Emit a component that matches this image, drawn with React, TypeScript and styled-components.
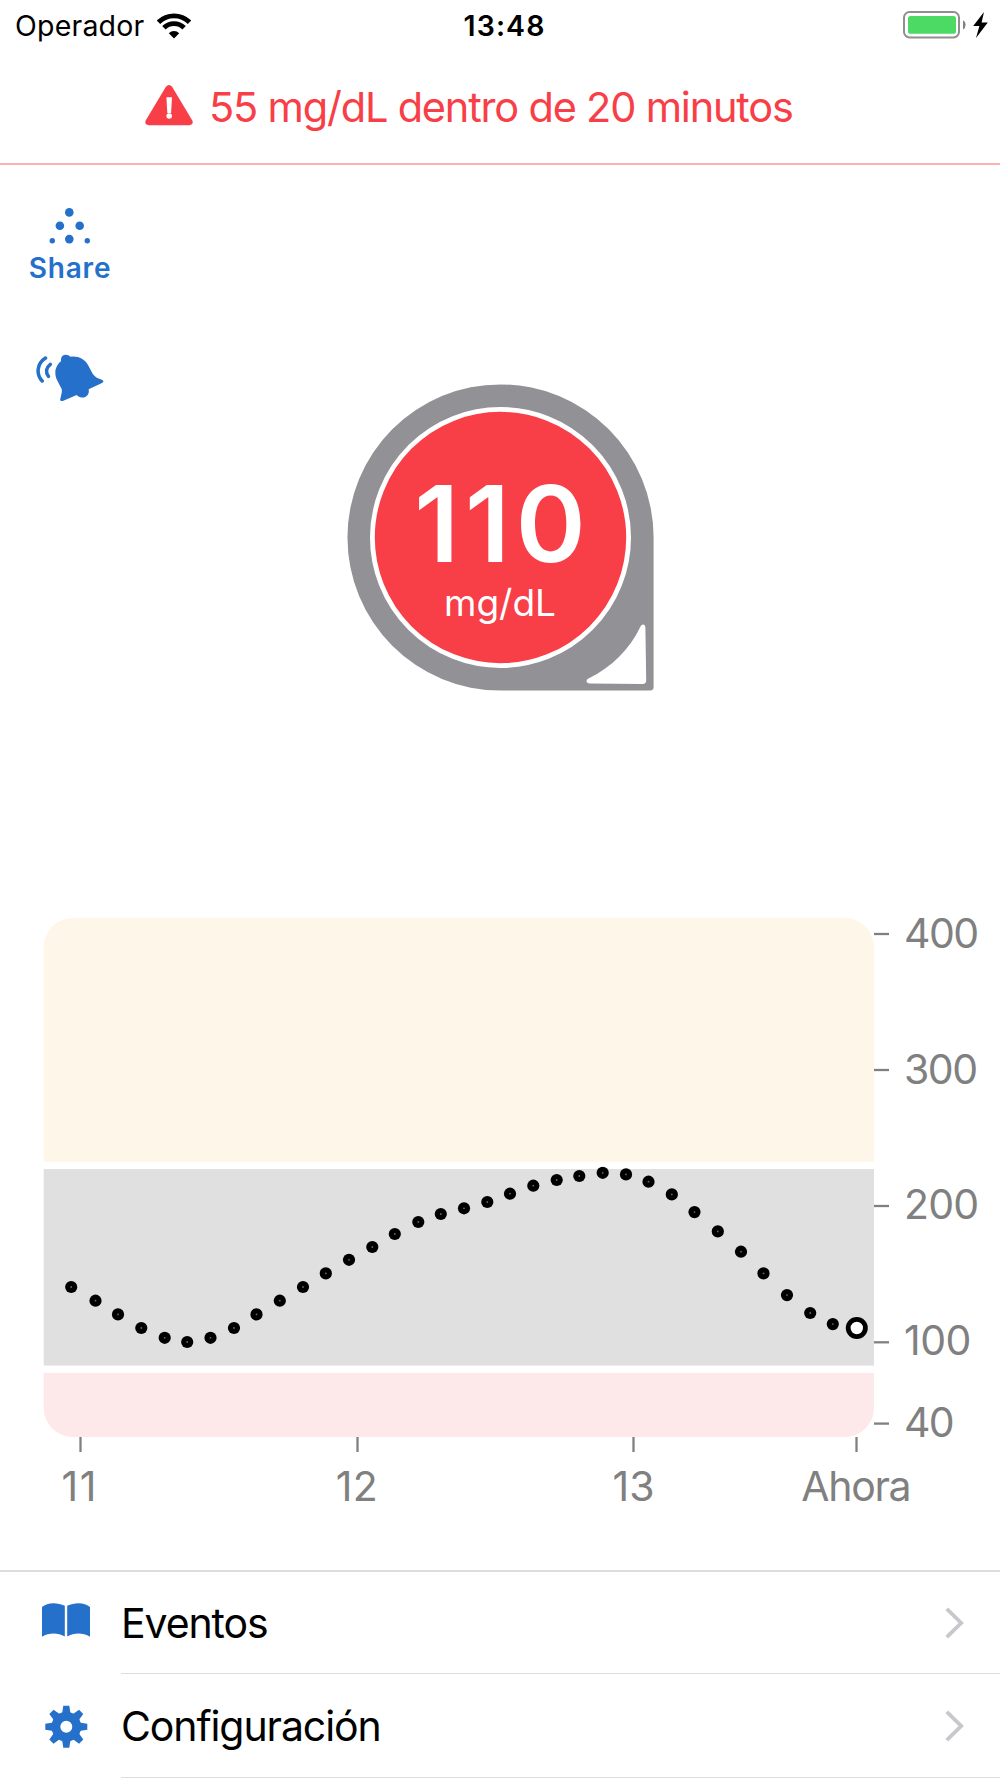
import React from "react";
import styled, { createGlobalStyle } from "styled-components";

const color = {
  red: "#f83e47",
  blue: "#2470ca",
  ring: "#929196",
  axis: "#808080",
  line: "#dcdcde",
};

const GlobalStyle = createGlobalStyle`
  *, *::before, *::after { box-sizing: border-box; }
  body {
    margin: 0;
    background: #fff;
    color: #000;
    font-family: Inter, "Liberation Sans", sans-serif;
  }
  svg { display: block; flex: none; }
`;

const Screen = styled.main`
  display: flex;
  flex-direction: column;
  width: 1000px;
  height: 1778px;
  overflow: hidden;
  background: #fff;
`;

const StatusBar = styled.header`
  display: grid;
  grid-template-columns: 1fr auto 1fr;
  align-items: center;
  height: 51px;
  padding: 0 12px 0 15px;
  font-size: 28.5px;
`;

const Carrier = styled.div`
  display: flex;
  align-items: center;
  gap: 13px;
  letter-spacing: 0.2px;
`;

const Clock = styled.time`
  font-weight: 600;
  letter-spacing: 1.1px;
  padding-left: 6px;
`;

const Power = styled.div`
  display: flex;
  justify-content: flex-end;
  align-items: center;
  gap: 7px;
  padding-bottom: 2px;
`;

const Alert = styled.div`
  display: flex;
  align-items: center;
  gap: 16px;
  height: 114px;
  padding: 0 0 0 145px;
  border-bottom: 2px solid #fcb0b4;
  color: ${color.red};
  font-size: 41.5px;
`;

const AlertText = styled.span`
  white-space: nowrap;
  letter-spacing: -1.2px;
`;

const Hero = styled.section`
  display: grid;
  grid-template-columns: 140px 1fr 140px;
  height: 735px;
`;

const Tools = styled.div`
  display: flex;
  flex-direction: column;
  align-items: center;
  gap: 68px;
  padding-top: 43px;
`;

const Tool = styled.button`
  display: flex;
  flex-direction: column;
  align-items: center;
  gap: 6px;
  padding: 0;
  border: 0;
  background: none;
  color: ${color.blue};
  font: 600 28px/36px Inter, "Liberation Sans", sans-serif;
  letter-spacing: 0.8px;
`;

const Gauge = styled.div`
  display: grid;
  justify-items: center;
  align-content: start;
  padding-top: 219px;

  > * { grid-area: 1 / 1; }
`;

const Reading = styled.div`
  display: flex;
  flex-direction: column;
  align-items: center;
  color: #fff;
`;

const ReadingValue = styled.strong`
  margin: 80px -6px 0 0;
  font-size: 106px;
  line-height: 120px;
  font-weight: 600;
  letter-spacing: 6px;
`;

const ReadingUnit = styled.span`
  font-size: 37px;
  line-height: 38px;
`;

const ChartArea = styled.section`
  height: 670px;
`;

const AxisLabel = styled.text<{ $tracking: number }>`
  fill: ${color.axis};
  font-size: 41px;
  letter-spacing: ${(p) => p.$tracking}px;
`;

const Menu = styled.nav`
  display: flex;
  flex-direction: column;
  border-top: 2px solid ${color.line};
`;

const MenuRow = styled.a`
  display: grid;
  grid-template-columns: 121px 1fr;
  height: 104px;

  &:first-child { height: 102px; }
`;

const MenuIcon = styled.span`
  display: flex;
  align-items: center;
  padding-left: 42px;
`;

const MenuBody = styled.span`
  display: flex;
  align-items: center;
  justify-content: space-between;
  padding-right: 36px;
  border-bottom: 1px solid ${color.line};
  font-size: 41px;
`;

const MenuLabel = styled.span`
  letter-spacing: -1.1px;
`;

const WifiIcon = () => (
  <svg width="34" height="26" viewBox="0 0 34 26">
    <g fill="none" stroke="#000" strokeWidth="4.8">
      <path d="M1.5 9.2A22.2 22.2 0 0 1 32.5 9.2" />
      <path d="M6.9 14.8A14.4 14.4 0 0 1 27.1 14.8" />
    </g>
    <path d="M17 25.5 11.8 20.2A7.4 7.4 0 0 1 22.2 20.2Z" />
  </svg>
);

const BatteryIcon = () => (
  <svg width="63" height="28" viewBox="0 0 63 28">
    <rect x="1" y="1" width="55" height="25.4" rx="5.5" fill="#fff" stroke="#8f8f8f" strokeWidth="2" />
    <rect x="5" y="5" width="48" height="17.8" rx="2.6" fill="#4cd964" />
    <path d="M60 9.3Q62.6 10.5 62.6 13.8T60 18.6Z" fill="#808080" />
  </svg>
);

const BoltIcon = () => (
  <svg width="15" height="26" viewBox="0 0 15 26">
    <path d="M11 0 .2 14.1H6.4L3 26 14.8 10.6H8.6Z" />
  </svg>
);

const WarningIcon = () => (
  <svg width="48" height="44" viewBox="0 0 48 44">
    <path
      d="M20.9 1.8Q24-1.8 27.1 1.8L47.3 35.4Q48.8 39.8 44.3 40.2H3.7Q-.8 39.8.7 35.4Z"
      fill={color.red}
    />
    <path d="M21.4 12.3H27L26.1 28H22.3Z" fill="#fff" />
    <circle cx="24.2" cy="31" r="2.8" fill="#fff" />
  </svg>
);

const ShareIcon = () => (
  <svg width="42" height="36" viewBox="0 0 42 36" fill={color.blue}>
    <circle cx="20.3" cy="4.4" r="4.3" />
    <circle cx="10.9" cy="17.8" r="4.3" />
    <circle cx="30.7" cy="17.8" r="4.3" />
    <circle cx="20.3" cy="31.1" r="4.3" />
    <circle cx="3.3" cy="32.7" r="2.7" />
    <circle cx="38.3" cy="32.7" r="2.7" />
  </svg>
);

const BellIcon = () => (
  <svg width="68" height="48" viewBox="108 493 204 144">
    <path
      d="M166 548C166 535 174 521 183 515V508C184 492 204 492 211 501C235 498 253 507 264 526L278 552C285 563 295 566 306 570C312 573 311 578 306 580L266 599C270 621 248 632 230 616L190 633C184 636 179 632 181 627C184 615 187 605 185 598L171 571C167 563 166 556 166 548Z"
      fill={color.blue}
    />
    <g fill="none" stroke={color.blue} strokeWidth="10.5" strokeLinecap="round">
      <path d="M136.500 505C110 522 108 554 126.500 574" />
      <path d="M151 524C138 534 136 548 145.500 560" />
    </g>
  </svg>
);

const GaugeShape = () => (
  <svg width="307" height="307" viewBox="0 0 307 307">
    <path
      d="M153.5.4A153.1 153.1 0 0 1 306.6 153.5V303Q306.6 306.6 303 306.6H153.5A153.1 153.1 0 0 1 153.5.4Z"
      fill={color.ring}
    />
    <circle cx="153.5" cy="153.5" r="128.1" fill={color.red} stroke="#fff" strokeWidth="4.8" />
    <path
      d="M298.4 243.5L299.2 296.5Q299 299.9 296 300.1L243 299.4C238.5 299 238.6 295.6 242 294.2C265 283 282.5 265 293 243.5C294.5 239.5 298.2 239.7 298.4 243.5Z"
      fill="#fff"
    />
  </svg>
);

const BookIcon = () => (
  <svg width="48" height="40" viewBox="0 0 48 40" fill={color.blue}>
    <path d="M0 4C5-.8 15-1 22.8 2.7V33.6C16 29.5 7 29.5 0 33.8Z" />
    <path d="M48 4C43-.8 33-1 25.2 2.7V33.6C32 29.5 41 29.5 48 33.8Z" />
  </svg>
);

const GearIcon = () => (
  <svg width="48" height="44" viewBox="-24.3 -22.7 48 44">
    {[0, 45, 90, 135, 180, 225, 270, 315].map((angle) => (
      <path
        key={angle}
        d="M-3-21H3L4-14.5Q5-12 9-10H-9Q-5-12-4-14.5Z"
        transform={`rotate(${angle})`}
        fill={color.blue}
      />
    ))}
    <circle r="10.4" fill="none" stroke={color.blue} strokeWidth="8.8" />
  </svg>
);

const Chevron = () => (
  <svg width="19" height="32" viewBox="0 0 19 32">
    <path d="M1.8 1.8 16.2 16 1.8 30.2" fill="none" stroke="#c7c7cc" strokeWidth="3.8" />
  </svg>
);

const points: [number, number][] = [
  [71.2, 1287], [95.5, 1300.7], [118, 1314.4], [141.3, 1328], [164.7, 1337.8],
  [187.2, 1342], [210.5, 1337.8], [234, 1328], [256.5, 1314.4], [279.8, 1300.7],
  [303, 1287], [325.8, 1273.4], [349, 1259.8], [372.3, 1247], [394.8, 1234],
  [418.3, 1222], [440.8, 1214], [464, 1208.3], [487.3, 1202], [510, 1193.7],
  [533.3, 1185.7], [556.7, 1180], [579.3, 1176], [602.7, 1172.8], [626, 1174.4],
  [648.5, 1181.7], [671.8, 1194.4], [694.5, 1212.1], [717.8, 1231.4], [741, 1251.7],
  [763.5, 1273.4], [787, 1295.1], [810.2, 1313], [832.8, 1324.1],
];

const yTicks = [
  { label: "400", y: 934, baseline: 948.3, tracking: -1.5 },
  { label: "300", y: 1070, baseline: 1084, tracking: -1.5 },
  { label: "200", y: 1206, baseline: 1219.4, tracking: -0.8 },
  { label: "100", y: 1342.3, baseline: 1355.2, tracking: -0.5 },
  { label: "40", y: 1423.6, baseline: 1437, tracking: -1.8 },
];

const xTicks = [
  { label: "11", x: 80.5, textX: 79.8, tracking: 1.5 },
  { label: "12", x: 357.5, textX: 357, tracking: 0.4 },
  { label: "13", x: 633.5, textX: 633.5, tracking: 0 },
  { label: "Ahora", x: 856.5, textX: 855.8, tracking: -1.3 },
];

const GlucoseChart = () => (
  <svg width="1000" height="670" viewBox="0 900 1000 670">
    <path d="M43.7 1161.8V947A29 29 0 0 1 72.7 918H845A29 29 0 0 1 874 947V1161.8Z" fill="#fef7e9" />
    <rect x="43.7" y="1169" width="830.3" height="196.6" fill="#e0e0e0" />
    <path d="M43.7 1373H874V1408A29 29 0 0 1 845 1437H72.7A29 29 0 0 1 43.7 1408Z" fill="#fee9ea" />
    {points.map(([x, y]) => (
      <g key={x}>
        <circle cx={x} cy={y} r="6.1" />
        <circle cx={x} cy={y} r="0.9" fill="#666" />
      </g>
    ))}
    <circle cx="856.8" cy="1328" r="8.6" fill="#fff" stroke="#000" strokeWidth="4.8" />
    {yTicks.map(({ label, y, baseline, tracking }) => (
      <g key={label}>
        <path d={`M874 ${y}H889`} stroke={color.axis} strokeWidth="2.3" />
        <AxisLabel x="904" y={baseline} $tracking={tracking}>{label}</AxisLabel>
      </g>
    ))}
    {xTicks.map(({ label, x, textX, tracking }) => (
      <g key={label}>
        <path d={`M${x} 1437V1452`} stroke={color.axis} strokeWidth="2.3" />
        <AxisLabel x={textX} y="1500.5" textAnchor="middle" $tracking={tracking}>{label}</AxisLabel>
      </g>
    ))}
  </svg>
);

const menuItems = [
  { label: "Eventos", Icon: BookIcon },
  { label: "Configuración", Icon: GearIcon },
];

export default function App() {
  return (
    <>
      <GlobalStyle />
      <Screen>
        <StatusBar>
          <Carrier>Operador<WifiIcon /></Carrier>
          <Clock>13:48</Clock>
          <Power><BatteryIcon /><BoltIcon /></Power>
        </StatusBar>
        <Alert role="alert">
          <WarningIcon />
          <AlertText>55 mg/dL dentro de 20 minutos</AlertText>
        </Alert>
        <Hero>
          <Tools>
            <Tool><ShareIcon />Share</Tool>
            <Tool aria-label="Alertas"><BellIcon /></Tool>
          </Tools>
          <Gauge>
            <GaugeShape />
            <Reading>
              <ReadingValue>110</ReadingValue>
              <ReadingUnit>mg/dL</ReadingUnit>
            </Reading>
          </Gauge>
        </Hero>
        <ChartArea><GlucoseChart /></ChartArea>
        <Menu>
          {menuItems.map(({ label, Icon }) => (
            <MenuRow key={label}>
              <MenuIcon><Icon /></MenuIcon>
              <MenuBody>
                <MenuLabel>{label}</MenuLabel>
                <Chevron />
              </MenuBody>
            </MenuRow>
          ))}
        </Menu>
      </Screen>
    </>
  );
}
